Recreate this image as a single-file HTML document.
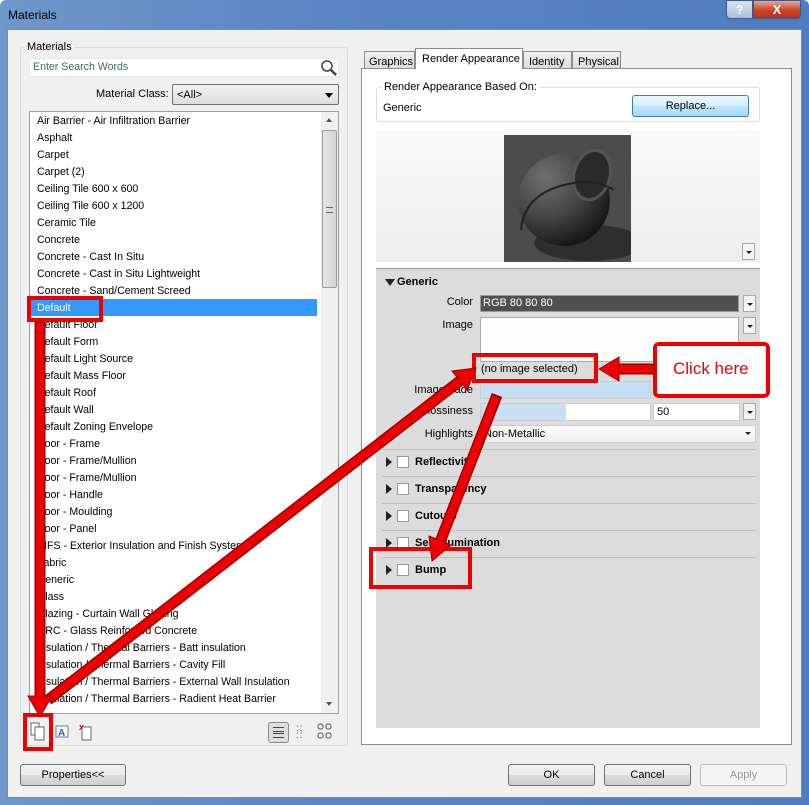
<!DOCTYPE html>
<html><head><meta charset="utf-8"><style>
*{margin:0;padding:0;box-sizing:border-box}
body{width:809px;height:805px;overflow:hidden;background:#fff;font-family:"Liberation Sans",sans-serif;font-size:11px;color:#000;position:relative}
.a{position:absolute}
.btn{position:absolute;border:1px solid #707070;border-radius:3px;background:linear-gradient(#f2f2f2,#ebebeb 50%,#dddddd 51%,#cfcfcf);text-align:center;font-size:11px}
.li{position:absolute;left:37px;font-size:10.6px;white-space:nowrap;height:17px;line-height:17px}
.lbl{position:absolute;font-size:11px;text-align:right;width:80px}
.sec{position:absolute;left:384px;font-weight:bold;font-size:11px}
.tri{position:absolute;width:0;height:0;border-top:5px solid transparent;border-bottom:5px solid transparent;border-left:6px solid #222}
.cb{position:absolute;width:12px;height:12px;border:1px solid #999;background:#fff}
.hr{position:absolute;left:382px;width:374px;height:1px;background:#bfbfbf}
.dd{position:absolute;width:13px;height:17px;border:1px solid #aaa;background:#f4f4f4}
.dd:after{content:"";position:absolute;left:3px;top:7px;border-left:3px solid transparent;border-right:3px solid transparent;border-top:3px solid #222}
</style></head><body>
<div class="a" style="left:0;top:0;width:809px;height:805px;background:linear-gradient(90deg,#6f97c9,#5b86c3 40%,#4f7cc0);border-radius:6px 6px 0 0"></div>
<div class="a" style="left:8px;top:8px;font-size:12px;color:#000">Materials</div>
<div class="a" style="left:726px;top:0;width:27px;height:19px;background:linear-gradient(#d9e3f0,#a9bfdc);border:1px solid #3b5a86;border-radius:0 0 0 4px;color:#fff;text-align:center;font-weight:bold;font-size:12px;line-height:18px">?</div>
<div class="a" style="left:753px;top:0;width:48px;height:19px;background:linear-gradient(#e9a597,#c7442a 55%,#b8321a);border:1px solid #3b5a86;border-radius:0 0 4px 0;color:#fff;text-align:center;font-weight:bold;font-size:13px;line-height:18px">X</div>
<div class="a" style="left:7px;top:29px;width:795px;height:769px;background:#f0f0f0;border:1px solid #6a8fc0"></div>

<div class="a" style="left:20px;top:47px;width:328px;height:699px;border:1px solid #d5dfe5;border-radius:3px"></div>
<div class="a" style="left:25px;top:41px;background:#f0f0f0;padding:0 2px;font-size:11px">Materials</div>
<div class="a" style="left:29px;top:58px;width:310px;height:19px;background:#fff;border:1px solid #e3e9ef"></div>
<div class="a" style="left:33px;top:61px;font-size:10.6px;color:#3a6a6a">Enter Search Words</div>
<svg class="a" style="left:319px;top:58px" width="20" height="20"><circle cx="8" cy="8" r="5" fill="none" stroke="#444" stroke-width="1.5"/><line x1="12" y1="12" x2="17" y2="17" stroke="#444" stroke-width="2.5"/></svg>
<div class="a" style="left:96px;top:88px;font-size:11px">Material Class:</div>
<div class="a" style="left:172px;top:84px;width:167px;height:21px;border:1px solid #707070;border-radius:2px;background:linear-gradient(#f2f2f2,#dedede)"></div>
<div class="a" style="left:177px;top:89px;font-size:11px">&lt;All&gt;</div>
<div class="a" style="left:325px;top:93px;border-left:4px solid transparent;border-right:4px solid transparent;border-top:5px solid #000"></div>
<div class="a" style="left:29px;top:111px;width:310px;height:603px;background:#fff;border:1px solid #a0a0a0;overflow:hidden">
<div class="a" style="left:291px;top:0;width:18px;height:601px;background:#f0f0f0"></div>
<div class="a" style="left:292px;top:18px;width:15px;height:158px;background:linear-gradient(90deg,#e6e6e6,#d4d4d4);border:1px solid #999;border-radius:2px"></div>
<div class="a" style="left:296px;top:95px;width:7px;height:6px;border-top:1px solid #666;border-bottom:1px solid #666"></div>
<div class="a" style="left:296px;top:6px;border-left:3px solid transparent;border-right:3px solid transparent;border-bottom:4px solid #555"></div>
<div class="a" style="left:296px;top:590px;border-left:3px solid transparent;border-right:3px solid transparent;border-top:4px solid #555"></div>
<div class="a" style="left:0;top:187px;width:287px;height:17px;background:#3399ff"></div>
</div>
<div class="li" style="top:113px">Air Barrier - Air Infiltration Barrier</div>
<div class="li" style="top:130px">Asphalt</div>
<div class="li" style="top:147px">Carpet</div>
<div class="li" style="top:164px">Carpet (2)</div>
<div class="li" style="top:181px">Ceiling Tile 600 x 600</div>
<div class="li" style="top:198px">Ceiling Tile 600 x 1200</div>
<div class="li" style="top:215px">Ceramic Tile</div>
<div class="li" style="top:232px">Concrete</div>
<div class="li" style="top:249px">Concrete - Cast In Situ</div>
<div class="li" style="top:266px">Concrete - Cast in Situ Lightweight</div>
<div class="li" style="top:283px">Concrete - Sand/Cement Screed</div>
<div class="li" style="top:300px;color:#fff">Default</div>
<div class="li" style="top:317px">Default Floor</div>
<div class="li" style="top:334px">Default Form</div>
<div class="li" style="top:351px">Default Light Source</div>
<div class="li" style="top:368px">Default Mass Floor</div>
<div class="li" style="top:385px">Default Roof</div>
<div class="li" style="top:402px">Default Wall</div>
<div class="li" style="top:419px">Default Zoning Envelope</div>
<div class="li" style="top:436px">Door - Frame</div>
<div class="li" style="top:453px">Door - Frame/Mullion</div>
<div class="li" style="top:470px">Door - Frame/Mullion</div>
<div class="li" style="top:487px">Door - Handle</div>
<div class="li" style="top:504px">Door - Moulding</div>
<div class="li" style="top:521px">Door - Panel</div>
<div class="li" style="top:538px">EIFS - Exterior Insulation and Finish System</div>
<div class="li" style="top:555px">Fabric</div>
<div class="li" style="top:572px">Generic</div>
<div class="li" style="top:589px">Glass</div>
<div class="li" style="top:606px">Glazing - Curtain Wall Glazing</div>
<div class="li" style="top:623px">GRC - Glass Reinforced Concrete</div>
<div class="li" style="top:640px">Insulation / Thermal Barriers - Batt insulation</div>
<div class="li" style="top:657px">Insulation / Thermal Barriers - Cavity Fill</div>
<div class="li" style="top:674px">Insulation / Thermal Barriers - External Wall Insulation</div>
<div class="li" style="top:691px">Insulation / Thermal Barriers - Radient Heat Barrier</div>
<svg class="a" style="left:29px;top:720px" width="70" height="24">
<rect x="2" y="3" width="8" height="12" fill="#fff" stroke="#666"/><rect x="6" y="7" width="9" height="13" fill="#fff" stroke="#666"/>
<rect x="27" y="6" width="12" height="11" fill="#fff" stroke="#5a7fb5"/><text x="29" y="16" font-size="10" font-weight="bold" fill="#2a6ac0" font-family="Liberation Sans">A</text>
<text x="50" y="10" font-size="9" font-weight="bold" fill="#d00" font-family="Liberation Sans">x</text><rect x="53" y="7" width="9" height="13" fill="#fff" stroke="#666"/>
</svg>
<div class="a" style="left:268px;top:722px;width:21px;height:21px;border:1px solid #888;border-radius:3px;background:#ddd"></div>
<div class="a" style="left:273px;top:727px;width:11px;height:11px;border-top:1px solid #444;border-bottom:1px solid #444"></div>
<div class="a" style="left:273px;top:731px;width:11px;height:3px;border-top:1px solid #444;border-bottom:1px solid #444"></div>
<div class="a" style="left:296px;top:725px;font-size:10px;line-height:7px;color:#444;letter-spacing:1px">:: <br>:: </div>
<svg class="a" style="left:316px;top:722px" width="20" height="20"><g fill="none" stroke="#555"><rect x="2" y="2" width="5" height="5" rx="2"/><rect x="10" y="2" width="5" height="5" rx="2"/><rect x="2" y="11" width="5" height="5" rx="2"/><rect x="10" y="11" width="5" height="5" rx="2"/></g></svg>

<div class="a" style="left:361px;top:68px;width:431px;height:677px;background:#fff;border:1px solid #8c8c8c"></div>
<div class="a" style="left:364px;top:51px;width:51px;height:18px;border:1px solid #8c8c8c;background:linear-gradient(#f2f2f2,#dcdcdc);padding:4px 0 0 4px;font-size:11px">Graphics</div>
<div class="a" style="left:415px;top:48px;width:108px;height:21px;border:1px solid #8c8c8c;border-bottom:none;background:#fff;padding:4px 0 0 6px;font-size:11px">Render Appearance</div>
<div class="a" style="left:523px;top:51px;width:49px;height:18px;border:1px solid #8c8c8c;background:linear-gradient(#f2f2f2,#dcdcdc);padding:4px 0 0 5px;font-size:11px">Identity</div>
<div class="a" style="left:572px;top:51px;width:49px;height:18px;border:1px solid #8c8c8c;background:linear-gradient(#f2f2f2,#dcdcdc);padding:4px 0 0 5px;font-size:11px">Physical</div>
<div class="a" style="left:376px;top:87px;width:384px;height:35px;border:1px solid #d5dfe5;border-radius:3px"></div>
<div class="a" style="left:381px;top:81px;background:#fff;padding:0 3px;font-size:11px">Render Appearance Based On:</div>
<div class="a" style="left:383px;top:102px;font-size:11px">Generic</div>
<div class="btn" style="left:632px;top:95px;width:117px;height:22px;line-height:20px;border-color:#3c7fb1;background:linear-gradient(#eaf6fd,#d9f0fc 50%,#bee6fd 51%,#a7d9f5)">Replace...</div>
<div class="a" style="left:376px;top:130px;width:384px;height:132px;background:linear-gradient(#fafafa,#eeeeee)"></div>
<svg class="a" style="left:504px;top:135px" width="127" height="127">
<defs><radialGradient id="g" cx="0.3" cy="0.25" r="0.8"><stop offset="0" stop-color="#707070"/><stop offset="0.55" stop-color="#444"/><stop offset="1" stop-color="#151515"/></radialGradient></defs>
<rect width="127" height="127" fill="#4c4c4c"/><ellipse cx="85" cy="108" rx="55" ry="18" fill="#2e2e2e"/>
<circle cx="60" cy="65" r="46" fill="url(#g)"/><ellipse cx="88" cy="40" rx="18" ry="25" fill="#2a2a2a" stroke="#555" stroke-width="3" transform="rotate(15 88 40)"/>
<path d="M17 95 Q20 60 60 50 Q90 42 110 55" stroke="#222" stroke-width="2" fill="none"/>
</svg>
<div class="dd" style="left:742px;top:243px"></div>
<div class="a" style="left:376px;top:268px;width:384px;height:460px;background:#dcdcdc;border-top:1px solid #999"></div>
<div class="a" style="left:385px;top:279px;border-left:5px solid transparent;border-right:5px solid transparent;border-top:7px solid #222"></div>
<div class="sec" style="left:397px;top:276px">Generic</div>
<div class="lbl" style="left:393px;top:296px">Color</div>
<div class="a" style="left:480px;top:295px;width:259px;height:17px;background:#505050;border:1px solid #999;color:#fff;padding:1px 2px;font-size:11px">RGB 80 80 80</div>
<div class="dd" style="left:743px;top:295px"></div>
<div class="lbl" style="left:393px;top:319px">Image</div>
<div class="a" style="left:480px;top:317px;width:259px;height:45px;background:#fdfdfd;border:1px solid #aaa"></div>
<div class="dd" style="left:743px;top:317px"></div>
<div class="a" style="left:481px;top:363px;font-size:11px">(no image selected)</div>
<div class="lbl" style="left:393px;top:384px">Image Fade</div>
<div class="a" style="left:480px;top:381px;width:171px;height:18px;background:#c7dff4;border:1px solid #ccc"></div>
<div class="lbl" style="left:393px;top:405px">Glossiness</div>
<div class="a" style="left:480px;top:403px;width:171px;height:18px;background:#fff;border:1px solid #ccc"></div>
<div class="a" style="left:481px;top:404px;width:85px;height:16px;background:#c7dff4"></div>
<div class="a" style="left:653px;top:403px;width:87px;height:18px;background:#fff;border:1px solid #ccc;padding:2px 3px;font-size:11px">50</div>
<div class="dd" style="left:743px;top:403px"></div>
<div class="lbl" style="left:393px;top:428px">Highlights</div>
<div class="a" style="left:480px;top:425px;width:276px;height:18px;background:linear-gradient(#fafafa,#efefef);border:1px solid #ccc;padding:2px 3px;font-size:11px">Non-Metallic</div>
<div class="a" style="left:745px;top:432px;border-left:3px solid transparent;border-right:3px solid transparent;border-top:3px solid #222"></div>
<div class="hr" style="top:449px"></div>
<div class="tri" style="left:386px;top:457px"></div><div class="cb" style="left:397px;top:456px"></div><div class="sec" style="left:415px;top:456px">Reflectivity</div>
<div class="hr" style="top:476px"></div>
<div class="tri" style="left:386px;top:484px"></div><div class="cb" style="left:397px;top:483px"></div><div class="sec" style="left:415px;top:483px">Transparency</div>
<div class="hr" style="top:503px"></div>
<div class="tri" style="left:386px;top:511px"></div><div class="cb" style="left:397px;top:510px"></div><div class="sec" style="left:415px;top:510px">Cutouts</div>
<div class="hr" style="top:530px"></div>
<div class="tri" style="left:386px;top:538px"></div><div class="cb" style="left:397px;top:537px"></div><div class="sec" style="left:415px;top:537px">Self Illumination</div>
<div class="hr" style="top:557px"></div>
<div class="tri" style="left:386px;top:565px"></div><div class="cb" style="left:397px;top:564px"></div><div class="sec" style="left:415px;top:564px">Bump</div>

<div class="btn" style="left:20px;top:764px;width:106px;height:22px;line-height:20px">Properties&lt;&lt;</div>
<div class="btn" style="left:508px;top:764px;width:87px;height:22px;line-height:20px">OK</div>
<div class="btn" style="left:604px;top:764px;width:87px;height:22px;line-height:20px">Cancel</div>
<div class="btn" style="left:700px;top:764px;width:87px;height:22px;line-height:20px;color:#999;border-color:#bbb;background:#f4f4f4">Apply</div>

<svg class="a" style="left:0;top:0" width="809" height="805">
<g fill="none" stroke="#e00" stroke-width="4">
<rect x="29" y="298" width="72" height="22"/>
<rect x="25" y="715" width="26" height="34"/>
<rect x="474" y="355" width="122" height="26"/>
<rect x="371" y="549" width="99" height="38"/>
</g>
<rect x="655" y="344" width="113" height="52" rx="4" fill="#fff" stroke="#e00" stroke-width="4"/>
<text x="673" y="374" font-family="Liberation Sans" font-size="17" fill="#e00">Click here</text>
<g stroke="#900" stroke-width="11" stroke-linecap="butt">
<line x1="40" y1="322" x2="40" y2="698"/>
<line x1="48" y1="700" x2="461" y2="380"/>
<line x1="497" y1="395" x2="440" y2="542"/>
<line x1="655" y1="369" x2="617" y2="369"/>
</g>
<g stroke="#e00" stroke-width="8" stroke-linecap="butt">
<line x1="40" y1="323" x2="40" y2="698"/>
<line x1="49" y1="699" x2="461" y2="380"/>
<line x1="496" y1="397" x2="440" y2="542"/>
<line x1="654" y1="369" x2="617" y2="369"/>
</g>
<g fill="#e00" stroke="#900" stroke-width="1">
<polygon points="40,717 28,696 52,696"/>
<polygon points="476,368 467,390 452,371"/>
<polygon points="432,561 429,536 451,545"/>
<polygon points="599,369 619,357 619,381"/>
</g>
</svg>
</body></html>
